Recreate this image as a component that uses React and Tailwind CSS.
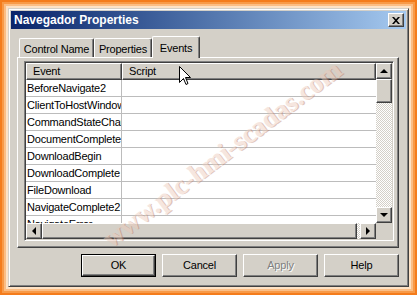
const EVENTS = [
  'BeforeNavigate2',
  'ClientToHostWindow',
  'CommandStateChange',
  'DocumentComplete',
  'DownloadBegin',
  'DownloadComplete',
  'FileDownload',
  'NavigateComplete2',
  'NavigateError',
  'NewWindow2',
];

// classic raised 3D edge (Win2000 style)
const raised =
  'border border-t-white border-l-white border-r-[#404040] border-b-[#404040] shadow-[inset_-1px_-1px_#808080]';

function Arrow({ dir }) {
  const paths = {
    up: 'M4 0 L8 4 L0 4 Z',
    down: 'M0 0 L8 0 L4 4 Z',
    left: 'M4 0 L4 8 L0 4 Z',
    right: 'M0 0 L4 4 L0 8 Z',
  };
  const vertical = dir === 'up' || dir === 'down';
  return (
    <svg
      width={vertical ? 8 : 4}
      height={vertical ? 4 : 8}
      viewBox={vertical ? '0 0 8 4' : '0 0 4 8'}
    >
      <path d={paths[dir]} fill="#000" />
    </svg>
  );
}

function ScrollButton({ dir }) {
  return (
    <div
      className={`${raised} flex h-[16px] w-[16px] shrink-0 items-center justify-center bg-[#d4d0c8]`}
    >
      <Arrow dir={dir} />
    </div>
  );
}

function Tab({ label, selected, width }) {
  if (selected) {
    return (
      <div
        className={`relative z-10 -mb-[1px] flex h-[22px] items-start justify-center rounded-t-[2px] border-l border-t border-r border-l-white border-t-white border-r-[#404040] bg-[#d4d0c8] pt-[3px] shadow-[inset_-1px_0_#808080] ${width}`}
      >
        {label}
      </div>
    );
  }
  return (
    <div
      className={`flex h-[19px] items-start justify-center rounded-t-[2px] border-l border-t border-r border-l-white border-t-white border-r-[#404040] bg-[#d4d0c8] pt-[2px] shadow-[inset_-1px_0_#808080] ${width}`}
    >
      {label}
    </div>
  );
}

function DialogButton({ label, isDefault, disabled }) {
  const text = disabled
    ? 'text-[#808080] [text-shadow:1px_1px_#ffffff]'
    : 'text-black';
  if (isDefault) {
    return (
      <div className="h-[23px] w-[75px] border border-black">
        <div
          className={`${raised} flex h-full w-full items-center justify-center bg-[#d4d0c8] ${text}`}
        >
          {label}
        </div>
      </div>
    );
  }
  return (
    <div
      className={`${raised} flex h-[23px] w-[75px] items-center justify-center bg-[#d4d0c8] ${text}`}
    >
      {label}
    </div>
  );
}

export default function App() {
  return (
    <div className="relative h-[295px] w-[417px] overflow-hidden bg-[#f47c1c] p-[2px] font-['Liberation_Sans',sans-serif] text-[11px] tracking-[-0.2px] text-black">
      <div className="h-full w-full bg-[#f89a48] p-[2px]">
        <div className="h-full w-full bg-[#fbbd84] p-[2px]">
          <div className="h-full w-full bg-[#fde2c6] p-[2px]">
            {/* Dialog window */}
            <div className="flex h-full w-full flex-col border border-t-[#d4d0c8] border-l-[#d4d0c8] border-r-[#404040] border-b-[#404040] bg-[#d4d0c8] p-[2px] shadow-[inset_1px_1px_#ffffff,inset_-1px_-1px_#808080]">
              {/* Title bar */}
              <div className="flex h-[18px] shrink-0 items-center justify-between bg-gradient-to-r from-[#0a246a] to-[#a6caf0] pl-[3px] pr-[2px]">
                <span className="text-[12px] font-bold tracking-normal text-white">
                  Navegador Properties
                </span>
                <div
                  className={`${raised} flex h-[14px] w-[16px] items-center justify-center bg-[#d4d0c8]`}
                >
                  <svg width="8" height="7" viewBox="0 0 8 7">
                    <path
                      d="M0 0 H2 L4 2.3 L6 0 H8 L5 3.5 L8 7 H6 L4 4.7 L2 7 H0 L3 3.5 Z"
                      fill="#000"
                    />
                  </svg>
                </div>
              </div>

              {/* Body */}
              <div className="flex flex-1 flex-col pl-[6px] pr-[7px] pt-[7px]">
                {/* Tabs */}
                <div className="flex h-[21px] shrink-0 items-end pl-[2px]">
                  <Tab label="Control Name" width="w-[75px]" />
                  <Tab label="Properties" width="w-[58px]" />
                  <Tab label="Events" width="w-[48px]" selected />
                </div>

                {/* Tab panel */}
                <div className="h-[191px] shrink-0 border border-t-white border-l-white border-r-[#404040] border-b-[#404040] pl-[6px] pr-[4px] pt-[3px] shadow-[inset_-1px_-1px_#808080]">
                  {/* List view (sunken) */}
                  <div className="flex h-[180px] flex-col border border-t-[#808080] border-l-[#808080] border-r-white border-b-white bg-white shadow-[inset_1px_1px_#404040,inset_-1px_-1px_#d4d0c8] p-[1px]">
                    <div className="flex h-[160px] shrink-0">
                      <div className="flex-1 overflow-hidden">
                        {/* Header */}
                        <div className="flex h-[17px]">
                          <div
                            className={`${raised} flex w-[96px] shrink-0 items-center bg-[#d4d0c8] pl-[6px]`}
                          >
                            Event
                          </div>
                          <div
                            className={`${raised} flex flex-1 items-center bg-[#d4d0c8] pl-[6px]`}
                          >
                            Script
                          </div>
                        </div>
                        {EVENTS.map((name) => (
                          <div
                            key={name}
                            className="flex h-[17px] border-b border-[#bcbcbc]"
                          >
                            <div className="w-[96px] shrink-0 overflow-hidden whitespace-nowrap border-r border-[#bcbcbc] pl-[1px] leading-[16px]">
                              {name}
                            </div>
                            <div className="flex-1" />
                          </div>
                        ))}
                      </div>

                      {/* Vertical scrollbar */}
                      <div className="flex w-[16px] shrink-0 flex-col">
                        <ScrollButton dir="up" />
                        <div className={`${raised} h-[24px] shrink-0 bg-[#d4d0c8]`} />
                        <div className="flex-1 bg-[repeating-conic-gradient(#d4d0c8_0%_25%,#ffffff_0%_50%)] bg-[length:2px_2px]" />
                        <ScrollButton dir="down" />
                      </div>
                    </div>

                    {/* Horizontal scrollbar */}
                    <div className="flex h-[16px] shrink-0">
                      <ScrollButton dir="left" />
                      <div className={`${raised} w-[315px] shrink-0 bg-[#d4d0c8]`} />
                      <div className="flex-1 bg-[repeating-conic-gradient(#d4d0c8_0%_25%,#ffffff_0%_50%)] bg-[length:2px_2px]" />
                      <ScrollButton dir="right" />
                      <div className="w-[16px] shrink-0 bg-[#d4d0c8]" />
                    </div>
                  </div>
                </div>

                {/* Buttons */}
                <div className="mt-[6px] flex justify-end gap-[6px]">
                  <DialogButton label="OK" isDefault />
                  <DialogButton label="Cancel" />
                  <DialogButton label="Apply" disabled />
                  <DialogButton label="Help" />
                </div>
              </div>
            </div>
          </div>
        </div>
      </div>

      {/* Watermark */}
      <div className="pointer-events-none absolute left-[222px] top-[154px] -translate-x-1/2 -translate-y-1/2 -rotate-[37deg] whitespace-nowrap font-['Liberation_Serif',serif] text-[27px] font-bold tracking-normal text-[#ecc9b9] opacity-45 [text-shadow:1px_1px_#b8806c]">
        www.plc-hmi-scadas.com
      </div>

      {/* Mouse cursor */}
      <svg
        className="pointer-events-none absolute left-[179px] top-[66px]"
        width="12"
        height="20"
        viewBox="0 0 12 20"
      >
        <path
          d="M0.5 0.5 V16.5 L4.5 12.5 L7 18.5 L9 17.5 L6.5 11.5 H11.5 Z"
          fill="#fff"
          stroke="#000"
          strokeWidth="1"
        />
      </svg>
    </div>
  );
}
